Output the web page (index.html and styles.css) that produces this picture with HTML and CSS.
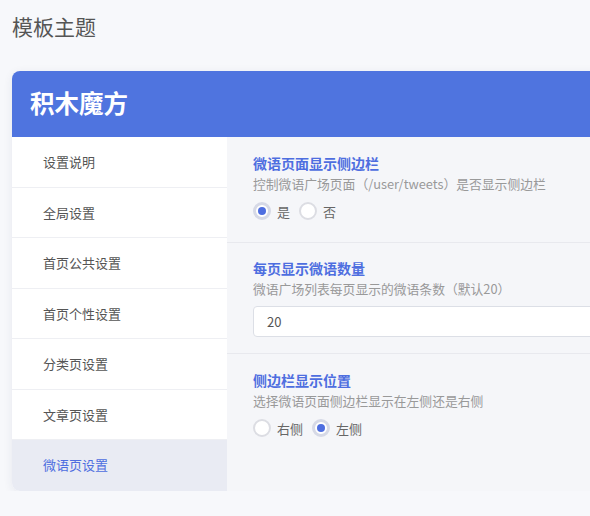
FILE: index.html
```html
<!DOCTYPE html>
<html lang="zh-CN">
<head>
<meta charset="utf-8">
<title>模板主题</title>
<link rel="stylesheet" href="styles.css">
</head>
<body>
<div class="page">
  <h1 class="page-title">模板主题</h1>
  <div class="card">
    <div class="card-header">积木魔方</div>
    <div class="card-body">
      <ul class="side">
        <li class="side-item">设置说明</li>
        <li class="side-item">全局设置</li>
        <li class="side-item">首页公共设置</li>
        <li class="side-item">首页个性设置</li>
        <li class="side-item">分类页设置</li>
        <li class="side-item">文章页设置</li>
        <li class="side-item active">微语页设置</li>
      </ul>
      <div class="content">
        <div class="section s1">
          <div class="label">微语页面显示侧边栏</div>
          <div class="desc">控制微语广场页面（/user/tweets）是否显示侧边栏</div>
          <div class="radios">
            <span class="radio checked"></span><span class="rlabel">是</span>
            <span class="radio"></span><span class="rlabel">否</span>
          </div>
        </div>
        <div class="section s2">
          <div class="label">每页显示微语数量</div>
          <div class="desc">微语广场列表每页显示的微语条数（默认20）</div>
          <div class="input">20</div>
        </div>
        <div class="section s3">
          <div class="label">侧边栏显示位置</div>
          <div class="desc">选择微语页面侧边栏显示在左侧还是右侧</div>
          <div class="radios">
            <span class="radio"></span><span class="rlabel">右侧</span>
            <span class="radio checked"></span><span class="rlabel">左侧</span>
          </div>
        </div>
      </div>
    </div>
  </div>
</div>
</body>
</html>
```
FILE: styles.css
```css
html, body {
  margin: 0;
  padding: 0;
  background: #f7f8fb;
  overflow: hidden;
  font-family: "Noto Sans CJK SC", "Noto Sans", sans-serif;
}
.page {
  padding-left: 12px;
  width: 640px;
}
.page-title {
  margin: 12px 0 31px;
  font-size: 21px;
  line-height: 28px;
  font-weight: 400;
  color: #555;
}
.card {
  width: 640px;
  border-radius: 8px;
  overflow: hidden;
  background: #f5f6f9;
  box-shadow: 0 2px 10px rgba(40, 50, 90, 0.08);
}
.card-header {
  height: 66px;
  background: #4f74df;
  color: #fff;
  font-size: 24.5px;
  font-weight: 700;
  line-height: 64px;
  padding-left: 18px;
}
.card-body {
  display: flex;
}
.side {
  list-style: none;
  margin: 0;
  padding: 0;
  width: 215px;
  background: #fff;
  flex: none;
}
.side-item {
  box-sizing: border-box;
  height: 50.5px;
  line-height: 50px;
  padding-left: 31px;
  font-size: 13px;
  color: #555;
  border-bottom: 1px solid #eeeff3;
}
.side-item.active {
  background: #e9ebf3;
  color: #4e6ee0;
  border-bottom: none;
}
.content {
  flex: 1;
  background: #f5f6f9;
}
.section {
  padding: 16px 26px 21px;
  border-bottom: 1px solid #e8e9ee;
}
.s2 {
  padding: 15px 26px 16px;
}
.s3 {
  border-bottom: none;
  padding-top: 16px;
}
.label {
  font-size: 14px;
  line-height: 20px;
  font-weight: 700;
  color: #4e6ee0;
}
.desc {
  margin-top: 2px;
  font-size: 12.8px;
  line-height: 18px;
  color: #999;
}
.radios {
  margin-top: 8px;
  height: 20px;
  display: flex;
  align-items: center;
}
.radio {
  box-sizing: border-box;
  width: 18px;
  height: 18px;
  border-radius: 50%;
  border: 2px solid #dcdde3;
  background: #fff;
  display: flex;
  align-items: center;
  justify-content: center;
}
.radio.checked {
  border: 3px solid #d6d9e6;
}
.radio.checked::after {
  content: "";
  width: 8px;
  height: 8px;
  border-radius: 50%;
  background: #4e6ee0;
}
.rlabel {
  margin: 0 9px 0 6px;
  font-size: 13px;
  color: #666;
}
.input {
  box-sizing: border-box;
  margin-top: 8px;
  height: 31px;
  width: 400px;
  border: 1px solid #dcdfe6;
  border-radius: 4px;
  background: #fff;
  padding-left: 13px;
  line-height: 29px;
  font-size: 13px;
  color: #555;
}
```
